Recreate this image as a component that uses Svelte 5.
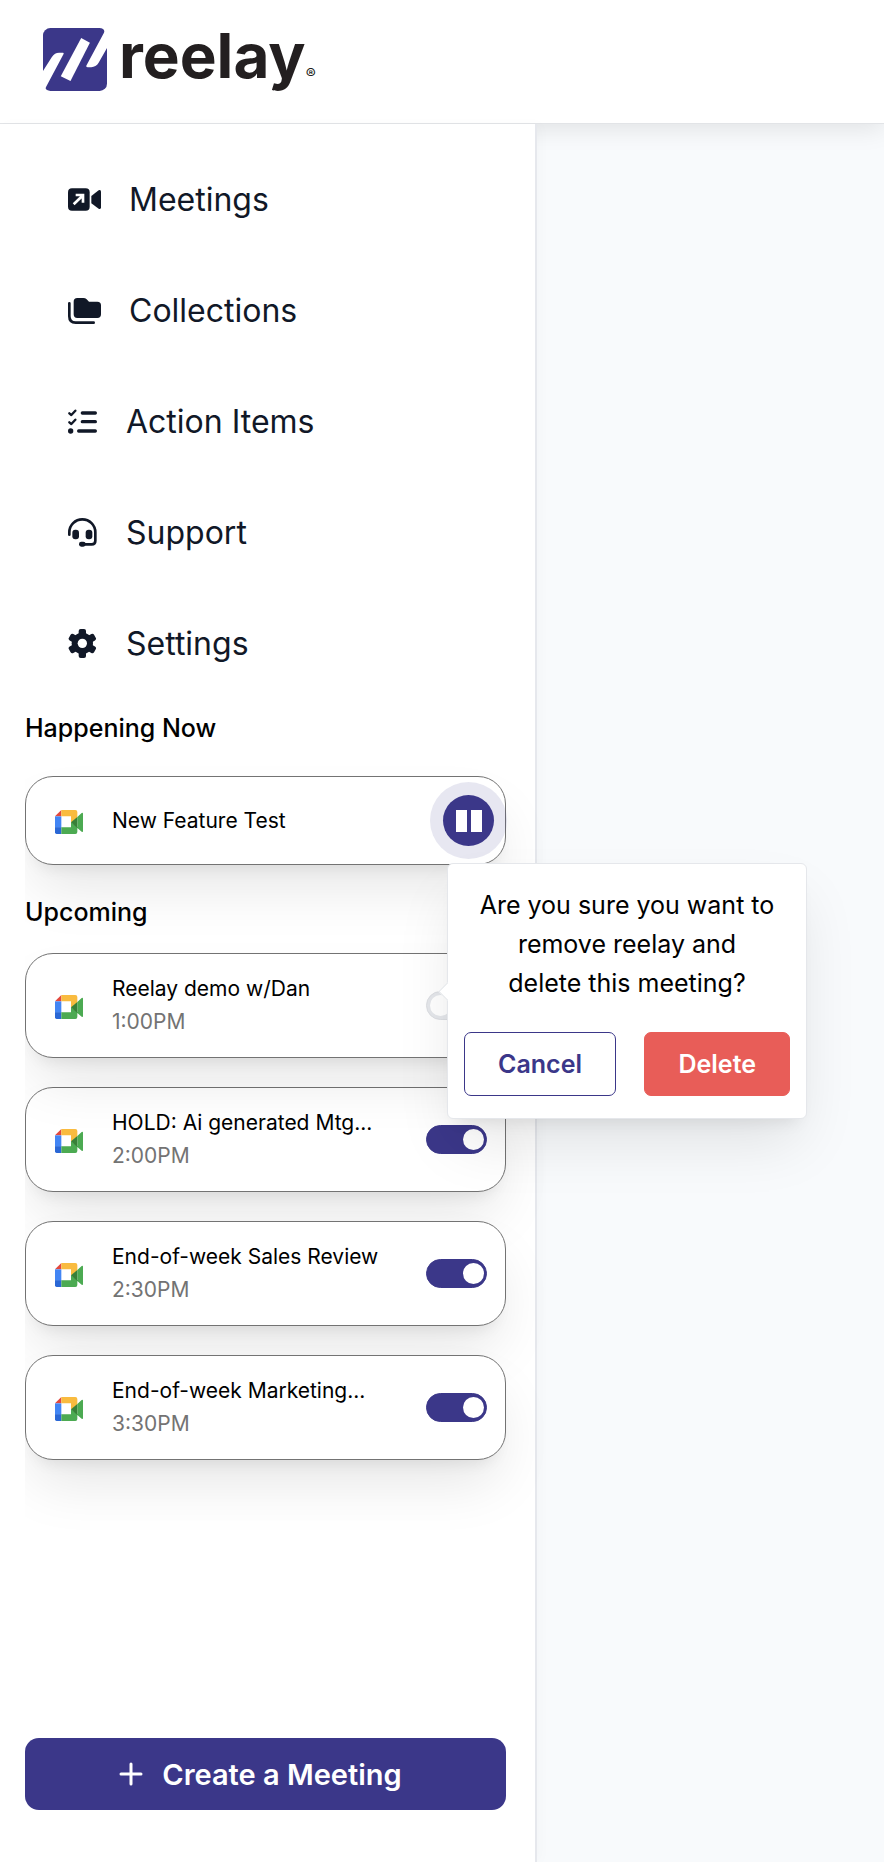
<script>
	const navItems = [
		{ label: 'Meetings', icon: 'meetings' },
		{ label: 'Collections', icon: 'collections' },
		{ label: 'Action Items', icon: 'actions' },
		{ label: 'Support', icon: 'support' },
		{ label: 'Settings', icon: 'settings' }
	];

	let upcoming = $state([
		{ title: 'Reelay demo w/Dan', time: '1:00PM', enabled: false },
		{ title: 'HOLD: Ai generated Mtg...', time: '2:00PM', enabled: true },
		{ title: 'End-of-week Sales Review', time: '2:30PM', enabled: true },
		{ title: 'End-of-week Marketing...', time: '3:30PM', enabled: true }
	]);

	// index of the meeting whose removal is being confirmed
	let confirming = $state(0);

	function cancelRemove() {
		upcoming[confirming].enabled = true;
		confirming = -1;
	}

	function removeMeeting() {
		upcoming.splice(confirming, 1);
		confirming = -1;
	}

	/** @param {number} i */
	function onToggle(i) {
		confirming = upcoming[i].enabled ? -1 : i;
	}
</script>

{#snippet meetIcon()}
	<svg class="meet-icon" viewBox="0 0 84 72" aria-hidden="true">
		<path fill="#e2483d" d="M0 19 19 0v19z" />
		<path fill="#4285f4" d="M0 19h19v34H0z" />
		<path fill="#2a67d5" d="M0 52h19v20H5q-5 0-5-5z" />
		<path fill="#f9bb3f" d="M19 0h42q6 0 6 6v17L48 38V19H19z" />
		<path fill="#4caa52" d="M19 52h29V36l19 15v15q0 6-6 6H19zM67 21 80 9q4-2 4 2v52q0 4-4 2L67 54z" />
		<path fill="#388038" d="m48 37 19-16v33z" />
	</svg>
{/snippet}

<div class="page">
	<header class="topbar">
		<a class="logo" href="/" aria-label="reelay home">
			<svg class="logo-mark" viewBox="0 0 191 188" aria-hidden="true">
				<rect width="191" height="188" rx="22" fill="#3b3789" />
				<path fill="#fff" d="M-1 130 26 87Q35 74 48 74h12q3 0 1 4L9 176q-4 9 8 13H-1z" />
				<path fill="#fff" d="M192 58l-26 46q-8 13-22 13h-10q-7 0-4-6L182 14q4-10-8-15h18z" />
				<path fill="#fff" d="m114 30 26 14-58 114-29-14z" />
			</svg>
			<span class="logo-name">reelay</span><span class="logo-reg">®</span>
		</a>
	</header>

	<div class="body">
		<aside class="sidebar">
			<nav aria-label="Main">
				{#each navItems as item}
					<a class="nav-link" href="/{item.icon}">
						{#if item.icon === 'meetings'}
							<svg width="33" height="23" viewBox="0 0 99 69" aria-hidden="true">
								<rect y="1" width="65" height="67" rx="12" />
								<path d="M70 24 92 7q7-3 7 4v47q0 7-7 4L70 46z" />
								<path fill="none" stroke="#fff" stroke-width="8" d="M17 49 45 22M23 21h22v23" />
							</svg>
						{:else if item.icon === 'collections'}
							<svg width="33" height="26" viewBox="0 0 99 78" aria-hidden="true">
								<path d="M28 0h18q6 0 10 4l7 7h25q11 0 11 11v27q0 11-11 11H28q-11 0-11-11V11Q17 0 28 0z" />
								<path fill="none" stroke="currentColor" stroke-width="8" stroke-linecap="round" d="M4 16v39q0 19 19 19h54" />
							</svg>
						{:else if item.icon === 'actions'}
							<svg width="30" height="25" viewBox="0 0 90 75" aria-hidden="true">
								<g fill="none" stroke="currentColor" stroke-linecap="round">
									<path stroke-width="7" stroke-linejoin="round" d="m4 13 6 5L22 5M4 40l6 5 12-13" />
									<path stroke-width="10" d="M43 12h39M43 38h39M32 66h50" />
								</g>
								<circle cx="8" cy="66" r="8" />
							</svg>
						{:else if item.icon === 'support'}
							<svg width="30" height="29" viewBox="0 0 90 87" aria-hidden="true">
								<path fill="none" stroke="currentColor" stroke-width="8" stroke-linecap="round" d="M4 50v-7a39 39 0 0 1 78 0v25q0 11-11 11H44" />
								<rect x="13" y="35" width="20" height="29" rx="9" />
								<rect x="53" y="35" width="20" height="29" rx="9" />
								<rect x="33" y="71" width="20" height="15" rx="7" />
							</svg>
						{:else}
							<svg width="30" height="29" viewBox="0 0 90 87" aria-hidden="true">
								<circle cx="43" cy="43" r="32" />
								{#each [0, 60, 120] as angle}
									<rect x="32" y="0" width="22" height="87" rx="6" transform="rotate({angle} 43 43.5)" />
								{/each}
								<circle cx="43" cy="43" r="14" fill="#fff" />
							</svg>
						{/if}
						<span>{item.label}</span>
					</a>
				{/each}
			</nav>

			<div class="meetings">
				<h2>Happening Now</h2>
				<div class="card live">
					{@render meetIcon()}
					<p class="title">New Feature Test</p>
					<button class="pause" type="button" aria-label="Pause recording">
						<span class="pause-disc">
							<span class="bar"></span>
							<span class="bar"></span>
						</span>
					</button>
				</div>

				<h2 class="upcoming">Upcoming</h2>
				<ul class="list">
					{#each upcoming as meeting, i}
						<li class="card" class:active={confirming === i}>
							{@render meetIcon()}
							<div class="info">
								<p class="title">{meeting.title}</p>
								<p class="time">{meeting.time}</p>
							</div>
							<div class="switch-wrap">
								<input
									class="switch"
									type="checkbox"
									role="switch"
									aria-label="Record {meeting.title}"
									bind:checked={meeting.enabled}
									onchange={() => onToggle(i)}
								/>
								{#if confirming === i}
									<div class="popover" role="dialog" aria-label="Remove meeting">
										<p>Are you sure you want to<br />remove reelay and<br />delete this meeting?</p>
										<div class="actions">
											<button class="cancel" type="button" onclick={cancelRemove}>Cancel</button>
											<button class="delete" type="button" onclick={removeMeeting}>Delete</button>
										</div>
									</div>
								{/if}
							</div>
						</li>
					{/each}
				</ul>
			</div>

			<button class="create" type="button">
				<svg width="24" height="24" viewBox="0 0 24 24" aria-hidden="true">
					<path fill="none" stroke="currentColor" stroke-width="3" stroke-linecap="round" d="M12 2v20M2 12h20" />
				</svg>
				Create a Meeting
			</button>
		</aside>
		<main></main>
	</div>
</div>

<style>
	:global(body) {
		margin: 0;
		background: #f8fafc;
	}

	.page {
		--brand: #3b3789;
		--shadow: 0 30px 56px -8px rgba(0, 0, 0, 0.1), 0 12px 15px -9px rgba(0, 0, 0, 0.08);
		display: flex;
		flex-direction: column;
		min-height: 100vh;
		font-family: Inter, 'Liberation Sans', sans-serif;
		color: #000;
	}

	.page * { box-sizing: border-box; }

	h2, p, ul { margin: 0; padding: 0; }

	button {
		font-family: inherit;
		cursor: pointer;
	}

	.topbar {
		display: flex;
		padding: 28px 43px 31px;
		background: #fff;
		border-bottom: 1px solid #e2e4e7;
		box-shadow: 0 4px 24px rgba(0, 0, 0, 0.1);
	}

	.logo {
		display: flex;
		align-items: flex-start;
		color: #231f20;
		text-decoration: none;
	}

	.logo-mark {
		width: 64px;
		height: 63px;
		margin: 0 12px 1px 0;
	}

	.logo-name {
		font-size: 62px;
		font-weight: 700;
		line-height: 56px;
	}

	.logo-reg {
		align-self: flex-end;
		font-size: 15px;
		line-height: 36px;
	}

	.body {
		display: flex;
		flex: 1;
	}

	main { flex: 1; }

	.sidebar {
		position: relative;
		z-index: 1;
		display: flex;
		flex-direction: column;
		width: 537px;
		padding: 20px 0 52px;
		background: #fff;
		border-right: 2px solid #e6e8ed;
		box-shadow: 4px 0 12px rgba(0, 0, 0, 0.02);
	}

	.nav-link {
		display: flex;
		align-items: center;
		gap: 28px;
		height: 111px;
		padding-left: 68px;
		font-size: 32px;
		color: #111827;
		text-decoration: none;
	}

	.nav-link svg { fill: currentColor; }

	/* card shadows stop at the left edge of the list */
	.meetings {
		margin-left: 25px;
		padding-right: 29px;
		clip-path: inset(-100px -100vw -100px 0);
	}

	h2 {
		font-size: 25px;
		font-weight: 500;
		line-height: 32px;
		margin: 13px 0 32px;
	}

	h2.upcoming { margin: 31px 0 25px; }

	.list {
		display: flex;
		flex-direction: column;
		gap: 29px;
		list-style: none;
	}

	.card {
		display: flex;
		align-items: center;
		min-height: 105px;
		padding: 0 18px 0 29px;
		background: #fff;
		border: 1px solid #737373;
		border-radius: 28px;
		box-shadow: var(--shadow);
	}

	.card.active {
		position: relative;
		z-index: 2;
	}

	.card.live {
		min-height: 89px;
		padding-right: 0;
	}

	.meet-icon {
		flex: none;
		width: 28px;
		height: 24px;
		margin: 3px 29px 0 0;
	}

	.info { padding-bottom: 2px; }

	.title {
		font-size: 21px;
		line-height: 33px;
		white-space: nowrap;
	}

	.time {
		font-size: 21px;
		line-height: 33px;
		color: #737373;
	}

	.pause {
		display: grid;
		place-items: center;
		width: 77px;
		height: 77px;
		margin-left: auto;
		margin-right: -2px;
		padding: 0;
		background: rgba(59, 55, 137, 0.12);
		border: 0;
		border-radius: 50%;
	}

	.pause-disc {
		display: flex;
		align-items: center;
		justify-content: center;
		gap: 4px;
		width: 51px;
		height: 51px;
		background: var(--brand);
		border-radius: 50%;
	}

	.bar {
		width: 11px;
		height: 22px;
		background: #fff;
	}

	.switch-wrap {
		position: relative;
		display: flex;
		margin-left: auto;
	}

	.switch {
		appearance: none;
		display: flex;
		align-items: center;
		width: 61px;
		height: 29px;
		margin: 0;
		padding: 0 3px;
		background: #e5e7eb;
		border: 1px solid #dcdee2;
		border-radius: 15px;
		cursor: pointer;
	}

	.switch::before {
		content: '';
		width: 21px;
		height: 21px;
		background: #fff;
		border-radius: 50%;
	}

	.switch:checked {
		justify-content: flex-end;
		background: var(--brand);
		border-color: var(--brand);
		padding: 0 2px;
	}

	.popover {
		position: absolute;
		top: -128px;
		left: 21px;
		width: 360px;
		padding: 22px 16px;
		background: #fff;
		border: 1px solid #e5e7eb;
		border-radius: 6px;
		box-shadow: var(--shadow);
		text-align: center;
	}

	.popover::before {
		content: '';
		position: absolute;
		top: 121px;
		left: -7px;
		width: 12px;
		height: 12px;
		background: #fff;
		border: 1px solid #e5e7eb;
		border-width: 0 0 1px 1px;
		transform: rotate(45deg);
	}

	.popover p {
		font-size: 25px;
		line-height: 39px;
	}

	.actions {
		display: flex;
		justify-content: space-between;
		margin-top: 29px;
	}

	.actions button {
		height: 64px;
		padding: 0 33px;
		border-radius: 7px;
		font-size: 25px;
		font-weight: 600;
	}

	.cancel {
		background: #fff;
		border: 1px solid var(--brand);
		color: var(--brand);
	}

	.delete {
		background: #e85d58;
		border: 1px solid #e85d58;
		color: #fff;
	}

	.create {
		display: flex;
		align-items: center;
		justify-content: center;
		gap: 19px;
		height: 72px;
		margin: auto 29px 0 25px;
		padding: 0 10px 0 0;
		background: var(--brand);
		border: 0;
		border-radius: 14px;
		color: #fff;
		font-size: 29px;
		font-weight: 600;
	}
</style>
